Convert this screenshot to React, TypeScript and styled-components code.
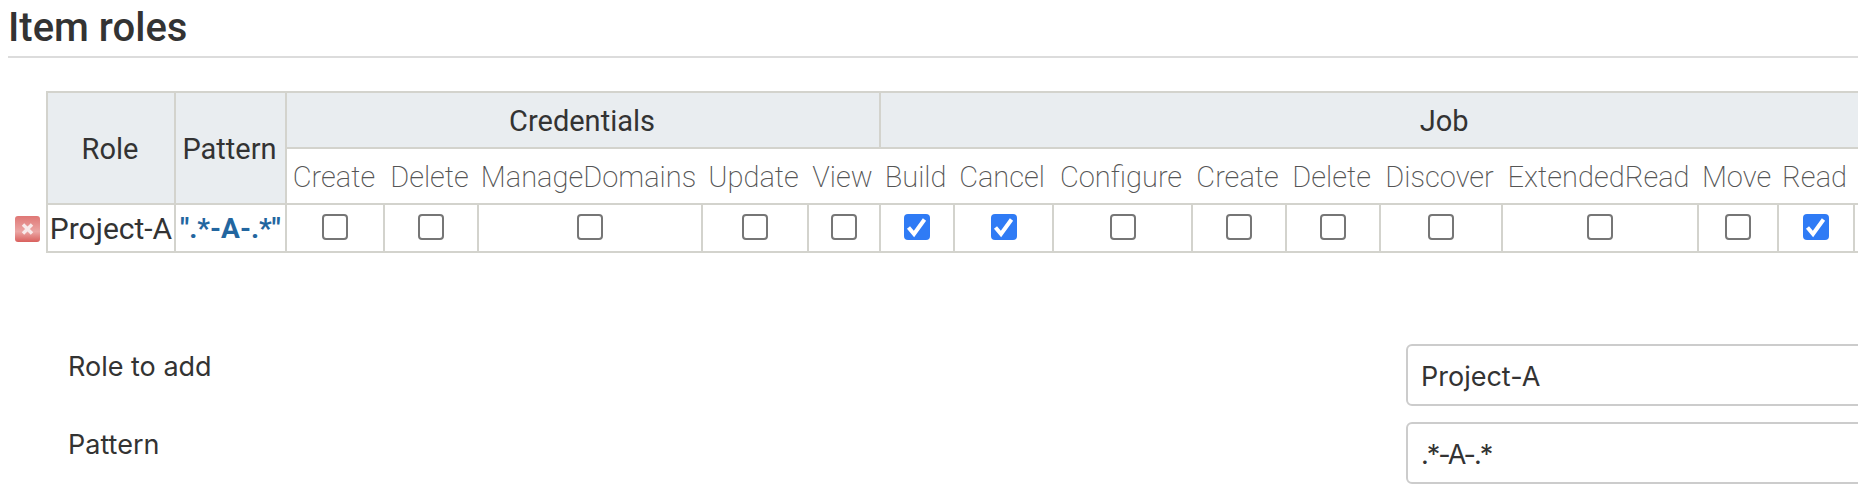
import styled, { createGlobalStyle } from "styled-components";

const credentials = [
  { name: "Create", width: 98 },
  { name: "Delete", width: 94 },
  { name: "ManageDomains", width: 224 },
  { name: "Update", width: 106 },
  { name: "View", width: 72 },
];

const job = [
  { name: "Build", width: 74, on: true },
  { name: "Cancel", width: 99, on: true },
  { name: "Configure", width: 139 },
  { name: "Create", width: 94 },
  { name: "Delete", width: 94 },
  { name: "Discover", width: 122 },
  { name: "ExtendedRead", width: 196 },
  { name: "Move", width: 80 },
  { name: "Read", width: 76, on: true },
  { name: "", width: 156 },
];

const columns: { name: string; width: number; on?: boolean }[] = [
  ...credentials,
  ...job,
];

function RemoveIcon() {
  return (
    <svg width="27" height="28" viewBox="0 0 27 28">
      <defs>
        <linearGradient id="removeFill" x1="0" y1="0" x2="0" y2="1">
          <stop offset="0" stopColor="#df7775" />
          <stop offset="0.6" stopColor="#eba6a4" />
          <stop offset="1" stopColor="#d9605d" />
        </linearGradient>
      </defs>
      <rect x="1" y="1" width="25" height="26" rx="3" fill="url(#removeFill)" />
      <path
        d="M9 9.5l9 9M18 9.5l-9 9"
        stroke="#f8eaea"
        strokeWidth="3.4"
      />
    </svg>
  );
}

function App() {
  return (
    <Page>
      <GlobalStyle />
      <Heading>Item roles</Heading>
      <Table>
        <colgroup>
          <col width={39} />
          <col width={128} />
          <col width={111} />
          {columns.map((column, i) => (
            <col key={i} width={column.width} />
          ))}
        </colgroup>
        <thead>
          <tr>
            <BlankCell rowSpan={3} />
            <HeadCell rowSpan={2}>Role</HeadCell>
            <HeadCell rowSpan={2}>Pattern</HeadCell>
            <HeadCell colSpan={credentials.length}>Credentials</HeadCell>
            <HeadCell colSpan={job.length}>Job</HeadCell>
          </tr>
          <tr>
            {columns.map((column, i) => (
              <PermCell key={i}>{column.name}</PermCell>
            ))}
          </tr>
        </thead>
        <tbody>
          <tr>
            <RemoveCell>
              <RemoveIcon />
            </RemoveCell>
            <RoleCell>Project-A</RoleCell>
            <PatternCell>".*-A-.*"</PatternCell>
            {columns.map((column, i) => (
              <BoxCell key={i}>
                <CheckBox $on={!!column.on}>
                  {column.on ? (
                    <svg width="22" height="22" viewBox="0 0 22 22">
                      <path
                        d="M2.5 11.5l5.5 6.5L18.5 3.5"
                        fill="none"
                        stroke="#fff"
                        strokeWidth="4"
                      />
                    </svg>
                  ) : null}
                </CheckBox>
              </BoxCell>
            ))}
          </tr>
        </tbody>
      </Table>
      <Form>
        <FormRow>
          <FormLabel>Role to add</FormLabel>
          <TextInput readOnly value="Project-A" />
        </FormRow>
        <FormRow>
          <FormLabel>Pattern</FormLabel>
          <TextInput readOnly value=".*-A-.*" $tight />
        </FormRow>
      </Form>
    </Page>
  );
}

const GlobalStyle = createGlobalStyle`
  html, body {
    margin: 0;
    padding: 0;
    background: #fff;
    overflow: hidden;
  }
`;

const Page = styled.div`
  width: 1858px;
  height: 490px;
  overflow: hidden;
  padding-left: 8px;
  box-sizing: border-box;
  color: #333;
  font-family: Roboto, "Liberation Sans", sans-serif;
`;

const Heading = styled.h2`
  margin: 0 0 33px;
  height: 56px;
  box-sizing: content-box;
  line-height: 56px;
  font-size: 40px;
  font-weight: 500;
  color: #333;
  border-bottom: 2px solid #dcdcdc;
`;

const Table = styled.table`
  table-layout: fixed;
  border-collapse: collapse;
  width: 2002px;
  font-size: 29px;
  line-height: 34px;
`;

const Cell = styled.td`
  border: 2px solid #d3d3cd;
  padding: 0;
  text-align: center;
  white-space: nowrap;
`;

const HeadCell = styled(Cell).attrs({ as: "th" })`
  height: 56px;
  padding: 2px 2px 0 0;
  box-sizing: border-box;
  background: #e9edf0;
  font-weight: 400;
  color: #333;
`;

const BlankCell = styled.td`
  border: none;
  padding: 0;
`;

const RemoveCell = styled.td`
  border: none;
  padding: 2px 0 0 6px;
  line-height: 0;
  svg {
    filter: blur(0.6px);
  }
`;

const PermCell = styled(Cell).attrs({ as: "th" })`
  height: 56px;
  padding: 1px 3px 0 0;
  box-sizing: border-box;
  border-left: none;
  border-right: none;
  font-weight: 200;
  color: #555;
`;

const RoleCell = styled(Cell)`
  height: 48px;
  box-sizing: border-box;
  padding-top: 2px;
  font-size: 30px;
`;

const PatternCell = styled(Cell)`
  padding-top: 2px;
  font-weight: 700;
  font-size: 28px;
  color: #23669f;
`;

const BoxCell = styled(Cell)`
  line-height: 0;
`;

const CheckBox = styled.span<{ $on: boolean }>`
  display: inline-flex;
  align-items: center;
  justify-content: center;
  width: 26px;
  height: 26px;
  margin-bottom: 2px;
  box-sizing: border-box;
  border-radius: 4px;
  background: ${(p) => (p.$on ? "#2f7bf5" : "#fff")};
  border: ${(p) => (p.$on ? "none" : "2px solid #767676")};
`;

const Form = styled.div`
  display: flex;
  flex-direction: column;
  gap: 16px;
  margin-top: 91px;
`;

const FormRow = styled.div`
  display: flex;
  align-items: flex-start;
  padding-left: 60px;
`;

const FormLabel = styled.div`
  width: 1338px;
  flex: none;
  padding-top: 7px;
  font-family: Inter, "Liberation Sans", sans-serif;
  font-size: 27px;
  line-height: 32px;
  color: #333;
`;

const TextInput = styled.input<{ $tight?: boolean }>`
  width: 700px;
  flex: none;
  height: 62px;
  box-sizing: border-box;
  padding: 2px 13px 0;
  border: 2px solid #ccc;
  border-radius: 6px;
  outline: none;
  font-family: Inter, "Liberation Sans", sans-serif;
  font-size: 27px;
  letter-spacing: ${(p) => (p.$tight ? "-2px" : "normal")};
  color: #333;
`;

export default App;
